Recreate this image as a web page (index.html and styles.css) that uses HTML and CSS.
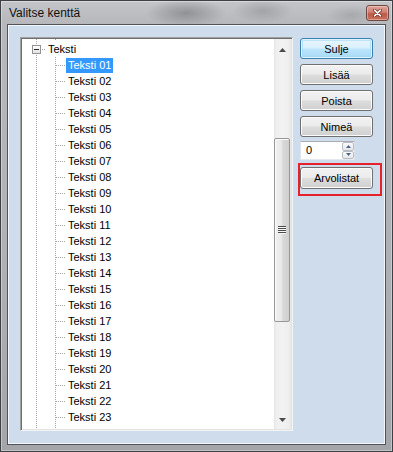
FILE: index.html
```html
<!DOCTYPE html>
<html lang="fi">
<head>
<meta charset="utf-8">
<title>Valitse kenttä</title>
<link rel="stylesheet" href="styles.css">
</head>
<body>
<div class="window">
  <div class="titlebar">
    <span class="title">Valitse kenttä</span>
    <button class="close" aria-label="Sulje">
      <svg width="9" height="8" viewBox="0 0 9 8">
        <path d="M1.5 1.2 L7.5 6.8 M7.5 1.2 L1.5 6.8" stroke="#6b2a22" stroke-width="3" stroke-linecap="round"/>
        <path d="M1.5 1.2 L7.5 6.8 M7.5 1.2 L1.5 6.8" stroke="#ffffff" stroke-width="1.6" stroke-linecap="round"/>
      </svg>
    </button>
  </div>
  <div class="client">
    <div class="treebox">
      <ul class="tree">
        <li class="node root"><span class="expander"></span><span class="connector"></span><span class="label">Teksti</span></li>
        <li class="node child"><span class="label selected">Teksti 01</span></li>
        <li class="node child"><span class="label">Teksti 02</span></li>
        <li class="node child"><span class="label">Teksti 03</span></li>
        <li class="node child"><span class="label">Teksti 04</span></li>
        <li class="node child"><span class="label">Teksti 05</span></li>
        <li class="node child"><span class="label">Teksti 06</span></li>
        <li class="node child"><span class="label">Teksti 07</span></li>
        <li class="node child"><span class="label">Teksti 08</span></li>
        <li class="node child"><span class="label">Teksti 09</span></li>
        <li class="node child"><span class="label">Teksti 10</span></li>
        <li class="node child"><span class="label">Teksti 11</span></li>
        <li class="node child"><span class="label">Teksti 12</span></li>
        <li class="node child"><span class="label">Teksti 13</span></li>
        <li class="node child"><span class="label">Teksti 14</span></li>
        <li class="node child"><span class="label">Teksti 15</span></li>
        <li class="node child"><span class="label">Teksti 16</span></li>
        <li class="node child"><span class="label">Teksti 17</span></li>
        <li class="node child"><span class="label">Teksti 18</span></li>
        <li class="node child"><span class="label">Teksti 19</span></li>
        <li class="node child"><span class="label">Teksti 20</span></li>
        <li class="node child"><span class="label">Teksti 21</span></li>
        <li class="node child"><span class="label">Teksti 22</span></li>
        <li class="node child last"><span class="label">Teksti 23</span></li>
      </ul>
      <div class="vscroll">
        <div class="arrow up">
          <svg width="7" height="4" viewBox="0 0 7 4"><path d="M0 4 L3.5 0 L7 4 Z" fill="#4a4a4a"/></svg>
        </div>
        <div class="track">
          <div class="thumb">
            <svg width="8" height="8" viewBox="0 0 8 8">
              <path d="M0 0.5 H8 M0 2.5 H8 M0 4.5 H8 M0 6.5 H8" stroke="#4b4b4b" stroke-width="1"/>
              <path d="M0 1.5 H8 M0 3.5 H8 M0 5.5 H8 M0 7.5 H8" stroke="#f8f8f8" stroke-width="1"/>
            </svg>
          </div>
        </div>
        <div class="arrow down">
          <svg width="7" height="4" viewBox="0 0 7 4"><path d="M0 0 L7 0 L3.5 4 Z" fill="#4a4a4a"/></svg>
        </div>
      </div>
    </div>
    <div class="actions">
      <button class="btn default">Sulje</button>
      <button class="btn">Lisää</button>
      <button class="btn">Poista</button>
      <button class="btn">Nimeä</button>
      <div class="spin">
        <span class="spin-value">0</span>
        <div class="spin-btns">
          <span class="spin-btn"><svg width="5" height="3" viewBox="0 0 5 3"><path d="M0 3 L2.5 0 L5 3 Z" fill="#4d6185"/></svg></span>
          <span class="spin-btn"><svg width="5" height="3" viewBox="0 0 5 3"><path d="M0 0 L5 0 L2.5 3 Z" fill="#4d6185"/></svg></span>
        </div>
      </div>
      <div class="mark">
        <button class="btn tall">Arvolistat</button>
      </div>
    </div>
  </div>
</div>
</body>
</html>
```

FILE: styles.css
```css
html, body {
  margin: 0;
  padding: 0;
}

body {
  width: 393px;
  height: 452px;
  overflow: hidden;
  font-family: "Liberation Sans", Arial, sans-serif;
  font-size: 11px;
  color: #000;
  background: #a5a8ac;
}

.window {
  box-sizing: border-box;
  width: 393px;
  height: 452px;
  display: flex;
  flex-direction: column;
  border: 1px solid #3d4044;
  background:
    radial-gradient(ellipse 40px 14px at 185px 12px, rgba(90, 92, 96, 0.45), transparent),
    radial-gradient(ellipse 30px 12px at 262px 10px, rgba(110, 112, 118, 0.35), transparent),
    radial-gradient(ellipse 24px 10px at 350px 14px, rgba(120, 122, 128, 0.3), transparent),
    linear-gradient(to bottom, #c3c5c8 0px, #b6b8bb 22px, #aeb0b3 60%, #a3a5a8 100%);
  box-shadow: inset 0 0 0 1px rgba(255, 255, 255, 0.35);
}

.titlebar {
  height: 22px;
  flex: 0 0 22px;
  display: flex;
  align-items: center;
  justify-content: space-between;
  padding: 0 3px 0 8px;
}

.title {
  font-size: 12px;
  color: #111;
  padding-top: 2px;
}

.close {
  box-sizing: border-box;
  width: 23px;
  height: 16px;
  margin-top: 2px;
  padding: 0;
  display: flex;
  align-items: center;
  justify-content: center;
  border: 1px solid #6e4a44;
  border-radius: 3px;
  background: linear-gradient(to bottom, #dfa69c 0%, #cf7f70 45%, #bd5a48 55%, #c9705e 100%);
  box-shadow: inset 0 0 0 1px rgba(255, 220, 210, 0.45);
}

.client {
  box-sizing: border-box;
  flex: 1 1 0;
  min-height: 0;
  margin: 1px 6px 6px 6px;
  display: flex;
  align-items: stretch;
  padding: 12px 0 13px 12px;
  background: #cfdcec;
  border: 1px solid #50545a;
  box-shadow: inset 0 0 0 1px rgba(255, 255, 255, 0.75);
}

.treebox {
  box-sizing: border-box;
  width: 273px;
  min-height: 0;
  display: flex;
  background: #fff;
  border: 1px solid;
  border-color: #a0a0a0 #f4f4f4 #f4f4f4 #a0a0a0;
  box-shadow: inset 1px 1px 0 #6f6f6f, inset -1px -1px 0 #e3e3e3;
  padding: 1px;
  overflow: hidden;
}

.tree {
  flex: 1 1 auto;
  margin: 0;
  padding: 2px 0 0 0;
  list-style: none;
  overflow: hidden;
  background-image:
    linear-gradient(to bottom, #a3a3a3 50%, transparent 50%),
    linear-gradient(to bottom, #a3a3a3 50%, transparent 50%);
  background-size: 1px 2px, 1px 2px;
  background-repeat: repeat-y, repeat-y;
  background-position: 14px 0, 33px 0;
}

.node {
  height: 16px;
  display: flex;
  align-items: center;
  white-space: nowrap;
}

.root {
  background: #fff;
  background-image: linear-gradient(to bottom, #a3a3a3 50%, transparent 50%);
  background-size: 1px 2px;
  background-repeat: repeat-y;
  background-position: 14px 0;
}

.child::before {
  content: "";
  width: 9px;
  height: 1px;
  margin-left: 34px;
  background-image: linear-gradient(to right, #a3a3a3 50%, transparent 50%);
  background-size: 2px 1px;
}

.expander {
  box-sizing: border-box;
  width: 9px;
  height: 9px;
  margin-left: 10px;
  display: flex;
  align-items: center;
  justify-content: center;
  border: 1px solid #939393;
  background: linear-gradient(to bottom, #ffffff, #e2e2e2);
}

.expander::after {
  content: "";
  width: 5px;
  height: 1px;
  background: #2a2a2a;
}

.connector {
  width: 4px;
  height: 1px;
  margin-left: 1px;
  background-image: linear-gradient(to right, #a3a3a3 50%, transparent 50%);
  background-size: 2px 1px;
}

.label {
  height: 15px;
  line-height: 15px;
  padding: 0 2px;
  margin-left: 1px;
}

.root .label {
  margin-left: 0;
}

.label.selected {
  background: #3399ff;
  color: #fff;
}

.vscroll {
  flex: 0 0 17px;
  display: flex;
  flex-direction: column;
  background: linear-gradient(to right, #e4e4e4 0px, #efefef 2px, #f2f2f2 50%, #eeeeee 15px, #e6e6e6 17px);
}

.arrow {
  height: 17px;
  flex: 0 0 17px;
  display: flex;
  justify-content: center;
  align-items: flex-start;
}

.arrow.up svg {
  margin-top: 9px;
}

.arrow.down svg {
  margin-top: 6px;
}

.track {
  flex: 1 1 auto;
  min-height: 0;
  display: flex;
  flex-direction: column;
}

.thumb {
  box-sizing: border-box;
  height: 184px;
  margin: 82px 1px 0 0;
  display: flex;
  align-items: center;
  justify-content: center;
  border: 1px solid #979797;
  border-radius: 2px;
  background: linear-gradient(to right, #f1f1f1 0%, #e9e9e9 45%, #d9d9d9 55%, #cfcfcf 100%);
  box-shadow: inset 1px 1px 0 #fbfbfb;
}

.actions {
  width: 73px;
  margin-left: 7px;
  padding-top: 1px;
  display: flex;
  flex-direction: column;
}

.btn {
  box-sizing: border-box;
  width: 73px;
  height: 21px;
  margin: 0 0 5px 0;
  padding: 0;
  font-family: "Liberation Sans", Arial, sans-serif;
  font-size: 11px;
  color: #000;
  border: 1px solid #707070;
  border-radius: 3px;
  background: linear-gradient(to bottom, #f2f2f2 0%, #ebebeb 48%, #dddddd 52%, #cfcfcf 100%);
  box-shadow: inset 0 0 0 1px #fbfbfb;
}

.btn.default {
  border-color: #3c7fb1;
  background: linear-gradient(to bottom, #eaf6fd 0%, #d9f0fc 48%, #bee6fd 52%, #a7d9f5 100%);
  box-shadow: inset 0 0 0 1px #dff2fd, inset 0 0 0 2px rgba(160, 215, 245, 0.6);
}

.btn.tall {
  height: 22px;
  margin: 0;
}

.spin {
  box-sizing: border-box;
  width: 55px;
  height: 19px;
  margin-top: -1px;
  display: flex;
  align-items: stretch;
  background: #fff;
  border: 1px solid;
  border-color: #abadb3 #dbdfe6 #e3e9ef #e2e3ea;
}

.spin-value {
  flex: 1 1 auto;
  padding-left: 5px;
  line-height: 17px;
}

.spin-btns {
  width: 12px;
  display: flex;
  flex-direction: column;
}

.spin-btn {
  box-sizing: border-box;
  flex: 1 1 0;
  display: flex;
  align-items: center;
  justify-content: center;
  border: 1px solid #b7bcc6;
  border-radius: 2px;
  background: linear-gradient(to bottom, #fafafa, #e6e7ea);
}

.mark {
  margin: 3px -9px 0 -2px;
  padding: 2px 7px 5px 0;
  border: 2px solid #e5222b;
}
```
